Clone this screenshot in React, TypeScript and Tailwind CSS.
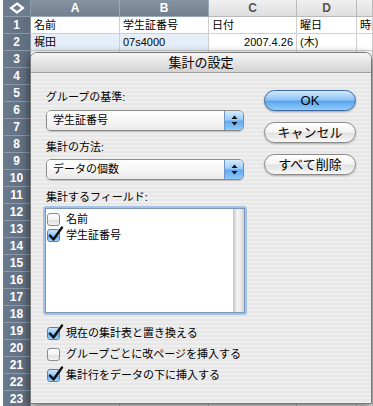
import React from "react";

const columns = [
  { name: "A", width: "w-[89px]", selected: true },
  { name: "B", width: "w-[89px]", selected: true },
  { name: "C", width: "w-[88px]", selected: false },
  { name: "D", width: "w-[60px]", selected: false },
  { name: "", width: "flex-1", selected: false },
];

const cells: Record<number, string[]> = {
  1: ["名前", "学生証番号", "日付", "曜日", "時間"],
  2: ["梶田", "07s4000", "2007.4.26", "(木)", ""],
};

const rows = Array.from({ length: 23 }, (_, i) => i + 1);

function Arrows() {
  return (
    <svg width="7" height="11" viewBox="0 0 7 11">
      <path d="M3.5 0.5 L6.5 4 L0.5 4 Z" fill="#111" />
      <path d="M3.5 10.5 L6.5 7 L0.5 7 Z" fill="#111" />
    </svg>
  );
}

function Popup({ label }: { label: string }) {
  return (
    <div className="flex h-[21px] overflow-hidden rounded-[5px] border border-[#8a8a8a] shadow-[0_1px_1px_rgba(0,0,0,0.18)]">
      <div className="flex-1 bg-[linear-gradient(180deg,#ffffff_0%,#f6f6f6_50%,#e9e9e9_100%)] pl-[6px] text-[11px] leading-[19px] text-black">
        {label}
      </div>
      <div className="flex w-[19px] items-center justify-center border-l border-[#6f95c4] bg-[linear-gradient(180deg,#d6ebfd_0%,#9bcbf6_45%,#62aaf0_55%,#8fcafa_100%)]">
        <Arrows />
      </div>
    </div>
  );
}

function Check({ checked }: { checked: boolean }) {
  return (
    <span
      className={
        checked
          ? "relative block h-[13px] w-[13px] shrink-0 rounded-[3px] border border-[#5a7fae] bg-[linear-gradient(180deg,#cfe6fc_0%,#8cc3f5_50%,#5ea8ef_60%,#a8d6fb_100%)]"
          : "relative block h-[13px] w-[13px] shrink-0 rounded-[3px] border border-[#8a8a8a] bg-[linear-gradient(180deg,#ffffff_0%,#f2f2f2_50%,#e0e0e0_60%,#f4f4f4_100%)]"
      }
    >
      {checked && (
        <svg
          className="absolute left-[0px] top-[-4px]"
          width="16"
          height="16"
          viewBox="0 0 16 16"
        >
          <path
            d="M2 9.5 L5.5 13.5 L14 1.5"
            fill="none"
            stroke="#111"
            strokeWidth="2.4"
            strokeLinecap="round"
            strokeLinejoin="round"
          />
        </svg>
      )}
    </span>
  );
}

function CheckRow({ checked, label }: { checked: boolean; label: string }) {
  return (
    <div className="flex h-[21px] items-center gap-[6px] pl-[1px]">
      <Check checked={checked} />
      <span className="text-[11px] text-black">{label}</span>
    </div>
  );
}

function AquaButton({ label, primary }: { label: string; primary?: boolean }) {
  return (
    <div
      className={
        primary
          ? "flex h-[21px] items-center justify-center rounded-full border border-[#3d68a3] bg-[linear-gradient(180deg,#d3e9fd_0%,#8fc5f6_45%,#5aa5ef_55%,#93cdfa_100%)] text-[13px] text-black shadow-[0_1px_2px_rgba(0,0,0,0.3)]"
          : "flex h-[21px] items-center justify-center rounded-full border border-[#8a8a8a] bg-[linear-gradient(180deg,#ffffff_0%,#f4f4f4_45%,#e2e2e2_55%,#f7f7f7_100%)] text-[13px] text-black shadow-[0_1px_2px_rgba(0,0,0,0.25)]"
      }
    >
      {label}
    </div>
  );
}

export default function App() {
  return (
    <div className="relative h-[406px] w-[373px] overflow-hidden bg-white font-['Liberation_Sans','Noto_Sans_CJK_JP',sans-serif]">
      {/* spreadsheet */}
      <div className="flex flex-col">
        <div className="flex h-[17px]">
          <div className="w-[3px] bg-white" />
          <div className="flex w-[28px] items-center justify-center border-r border-b border-[#8b99a8] bg-[#6c7c8e]">
            <svg width="16" height="12" viewBox="0 0 16 12">
              <path d="M8 1.5 L14 6 L8 10.5 L2 6 Z" fill="none" stroke="#fff" strokeWidth="2.2" />
            </svg>
          </div>
          {columns.map((c, i) => (
            <div
              key={i}
              className={
                c.selected
                  ? `${c.width} flex items-center justify-center border-r border-b border-[#9aa7b4] bg-[linear-gradient(180deg,#8593a2,#717f8f)] text-[12px] font-bold text-white`
                  : `${c.width} flex items-center justify-center border-r border-b border-[#b9b9b9] bg-[linear-gradient(180deg,#f0f0f0,#dedede)] text-[12px] font-bold text-[#555]`
              }
            >
              {c.name}
            </div>
          ))}
        </div>
        {rows.map((r) => (
          <div key={r} className="flex h-[17px]">
            <div className="w-[3px] bg-white" />
            <div className="flex w-[28px] items-center justify-center border-r border-b border-[#8b99a8] bg-[linear-gradient(90deg,#6a7a8c,#5e6d7e)] text-[12px] font-bold text-white">
              {r}
            </div>
            {columns.map((c, i) => (
              <div
                key={i}
                className={
                  r === 2 && i < 2
                    ? `${c.width} overflow-hidden whitespace-nowrap border-r border-b border-[#cfcfcf] bg-[#e6eefa] px-[3px] text-[11px] leading-[16px] text-black`
                    : r === 2 && i === 2
                      ? `${c.width} overflow-hidden whitespace-nowrap border-r border-b border-[#cfcfcf] px-[3px] text-right text-[11px] leading-[16px] text-black`
                      : `${c.width} overflow-hidden whitespace-nowrap border-r border-b border-[#cfcfcf] px-[3px] text-[11px] leading-[16px] text-black`
                }
              >
                {cells[r]?.[i] ?? ""}
              </div>
            ))}
          </div>
        ))}
      </div>

      {/* sheet dialog */}
      <div className="absolute left-[30px] top-[52px] flex h-[352px] w-[342px] flex-col overflow-hidden rounded-t-[7px] border border-[#7a7a7a] shadow-[0_3px_10px_rgba(0,0,0,0.6)]">
        <div className="flex h-[20px] shrink-0 items-center justify-center border-b border-[#9c9c9c] bg-[linear-gradient(180deg,#f5f5f5,#d3d3d3)] text-[13px] text-black">
          集計の設定
        </div>
        <div className="flex flex-1 bg-[repeating-linear-gradient(180deg,#eeeeee_0px,#eeeeee_2px,#e7e7e7_2px,#e7e7e7_4px)] pl-[15px] pt-[17px]">
          <div className="flex w-[198px] flex-col">
            <div className="text-[11px] leading-[14px] text-black">グループの基準:</div>
            <div className="mt-[6px]">
              <Popup label="学生証番号" />
            </div>
            <div className="mt-[9px] text-[11px] leading-[14px] text-black">集計の方法:</div>
            <div className="mt-[5px]">
              <Popup label="データの個数" />
            </div>
            <div className="mt-[10px] text-[11px] leading-[14px] text-black">集計するフィールド:</div>
            <div className="-mx-[3px] mt-[2px] h-[109px] rounded-[3px] bg-[#a2c1e5] p-[2px]">
              <div className="flex h-full border border-[#7d97b6] bg-white">
                <div className="flex flex-1 flex-col pl-[1px] pt-[2px]">
                  <div className="flex h-[16px] items-center gap-[6px]">
                    <Check checked={false} />
                    <span className="text-[11px] text-black">名前</span>
                  </div>
                  <div className="flex h-[16px] items-center gap-[6px]">
                    <Check checked={true} />
                    <span className="text-[11px] text-black">学生証番号</span>
                  </div>
                </div>
                <div className="w-[11px] bg-[linear-gradient(90deg,#c4c4c4,#f6f6f6_40%,#e6e6e6_75%,#cdcdcd)]" />
              </div>
            </div>
            <div className="mt-[8px] flex flex-col">
              <CheckRow checked={true} label="現在の集計表と置き換える" />
              <CheckRow checked={false} label="グループごとに改ページを挿入する" />
              <CheckRow checked={true} label="集計行をデータの下に挿入する" />
            </div>
          </div>
          <div className="ml-[20px] flex w-[92px] flex-col gap-[11px]">
            <AquaButton label="OK" primary />
            <AquaButton label="キャンセル" />
            <AquaButton label="すべて削除" />
          </div>
        </div>
      </div>
    </div>
  );
}
